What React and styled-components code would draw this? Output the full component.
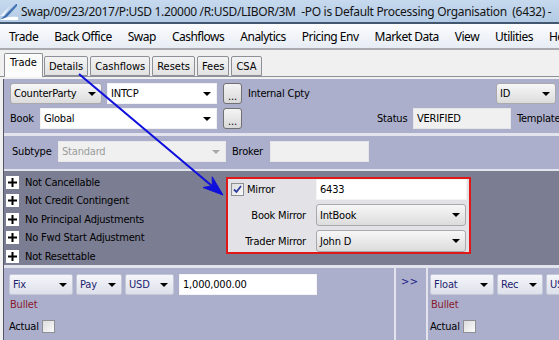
import React from 'react';
import styled, { createGlobalStyle, css } from 'styled-components';

const UI = '"Noto Sans", "Open Sans", sans-serif';
const FORM = '"DejaVu Sans Condensed", "Liberation Sans", sans-serif';

const LAV = '#abafcc';
const DARK = '#7b7d92';
const SEP = '#e2e3ec';

const GlobalStyle = createGlobalStyle`
  html, body { margin: 0; padding: 0; overflow: hidden; background: #f0f0f0; }
  #root { width: 559px; height: 340px; overflow: hidden; }
`;

const Window = styled.div`
  position: relative;
  width: 640px;
  height: 340px;
  overflow: hidden;
  background: #f0f0f0;
  font-family: ${FORM};
  font-size: 11px;
  letter-spacing: -0.2px;
  color: #000;
`;

const TitleBar = styled.div`
  height: 22px;
  display: flex;
  align-items: center;
  background: linear-gradient(#c6d9ee, #b3cbe5);
  border-bottom: 2px solid #42566f;
  font-family: ${UI};
  font-size: 12px;
  letter-spacing: -0.32px;
  color: #141414;
  white-space: pre;
`;

const TitleText = styled.span`
  margin-left: 3px;
`;

const MenuBar = styled.div`
  height: 24px;
  display: flex;
  align-items: center;
  padding-left: 1px;
  background: linear-gradient(#fbfcfe, #e7ecf4);
  border-bottom: 2px solid #a9abb0;
  font-family: ${UI};
  font-size: 12px;
  letter-spacing: -0.5px;
  white-space: nowrap;
`;

const MenuItem = styled.span`
  padding: 0 8px;
`;

const TabStrip = styled.div`
  height: 26px;
  display: flex;
  align-items: flex-end;
  padding-left: 4px;
  background: #f0f0f0;
  position: relative;
  z-index: 1;
`;

const Tab = styled.div`
  box-sizing: border-box;
  height: ${(p) => (p.$active ? 24 : 20)}px;
  margin-right: ${(p) => (p.$active ? 1 : 2)}px;
  margin-bottom: ${(p) => (p.$active ? -1 : 0)}px;
  padding: ${(p) => (p.$active ? '2px 5px 0' : '3px 4px 0')};
  border: 1px solid #8d9096;
  border-bottom: ${(p) => (p.$active ? 'none' : '1px solid #8d9096')};
  border-radius: 2px 2px 0 0;
  background: ${(p) => (p.$active ? '#fcfcfc' : 'linear-gradient(#f3f3f3, #e2e2e2)')};
  font-size: 11px;
  letter-spacing: 0;
  line-height: 14px;
`;

const TabBody = styled.div`
  border-top: 1px solid #8d9096;
  padding-top: 2px;
  background: #f0f0f0;
`;

const Frame = styled.div`
  margin-left: 3px;
  border-left: 1px solid #54566a;
  background: ${LAV};
`;

const HeaderPanel = styled.div`
  height: 57px;
  box-sizing: border-box;
  padding: 4px 0 0 6px;
  display: flex;
  flex-direction: column;
  gap: 4px;
  border-bottom: 3px solid ${SEP};
`;

const Row = styled.div`
  display: flex;
  align-items: center;
  height: 21px;
  gap: ${(p) => p.$gap ?? 5}px;
  white-space: nowrap;
`;

const Label = styled.span`
  display: inline-block;
  width: ${(p) => (p.$w ? `${p.$w}px` : 'auto')};
  margin-left: ${(p) => p.$ml || 0}px;
  padding-right: ${(p) => p.$pr || 0}px;
  text-align: ${(p) => (p.$right ? 'right' : 'left')};
  flex-shrink: 0;
  color: ${(p) => p.$color || '#000'};
`;

const variants = {
  button: css`
    background: linear-gradient(#f7f7f7, #dcdcdc);
    border-color: #a9a9ad;
    border-radius: 3px;
  `,
  field: css`
    background: #fff;
    border-color: #f2f2f2;
  `,
  disabled: css`
    background: #f0f0f0;
    border-color: #e8e8e8;
    color: #9b9b9b;
  `,
  leg: css`
    background: linear-gradient(#f5f6fb, #dde0ea);
    border-color: #c4c7d6;
    border-radius: 2px;
    color: #1d1d6e;
  `,
};

const Combo = styled.div`
  box-sizing: border-box;
  flex-shrink: 0;
  width: ${(p) => p.$w}px;
  height: ${(p) => p.$h || 21}px;
  display: flex;
  align-items: center;
  justify-content: space-between;
  padding: 0 5px 0 3px;
  border: 1px solid;
  ${(p) => variants[p.$variant || 'field']}
`;

const Arrow = styled.span`
  width: 0;
  height: 0;
  border-left: 4px solid transparent;
  border-right: 4px solid transparent;
  border-top: 4px solid ${(p) => (p.$dim ? '#a8a8a8' : '#000')};
`;

const Field = styled.div`
  box-sizing: border-box;
  flex-shrink: 0;
  width: ${(p) => p.$w}px;
  height: ${(p) => p.$h || 21}px;
  margin-left: ${(p) => p.$ml || 0}px;
  display: flex;
  align-items: center;
  padding: 0 3px;
  background: ${(p) => (p.$readonly ? '#f0f0f0' : '#fff')};
  border: 1px solid ${(p) => (p.$readonly ? '#e6e6e6' : '#f4f4f4')};
`;

const DotsButton = styled.div`
  box-sizing: border-box;
  flex-shrink: 0;
  width: 19px;
  height: 21px;
  margin-left: 1px;
  border: 1px solid #707070;
  border-radius: 3px;
  background: linear-gradient(#f4f4f4, #d9d9d9);
  display: flex;
  align-items: flex-end;
  justify-content: center;
  line-height: 13px;
  font-size: 11px;
`;

const SubtypePanel = styled.div`
  height: 35px;
  box-sizing: border-box;
  padding: 5px 0 0 8px;
  border-bottom: 2px solid ${SEP};
`;

const OptionsPanel = styled.div`
  height: 97px;
  box-sizing: border-box;
  background: ${DARK};
  border-bottom: 3px solid ${SEP};
  display: flex;
  align-items: flex-start;
  padding: 2px 0 0 2px;
`;

const OptionList = styled.div`
  width: 220px;
  display: flex;
  flex-direction: column;
`;

const OptionItem = styled.div`
  height: 18.5px;
  display: flex;
  align-items: center;
  gap: 6px;
  white-space: nowrap;
`;

const PlusBox = styled.span`
  width: 13px;
  height: 13px;
  background: #fff;
  display: flex;
  align-items: center;
  justify-content: center;
  flex-shrink: 0;
`;

const MirrorBox = styled.div`
  margin-top: 4px;
  width: 245px;
  height: 77px;
  box-sizing: border-box;
  border: 2px solid #e01818;
  background: #e3e3e7;
  display: grid;
  grid-template-columns: 88px 151px;
  grid-template-rows: 21px 22px 22px;
  row-gap: 4px;
  align-items: center;
`;

const CheckWrap = styled.label`
  display: flex;
  align-items: center;
  gap: 3px;
  padding-left: 3px;
`;

const Box = styled.span`
  box-sizing: border-box;
  width: 13px;
  height: 13px;
  border: 1px solid #8e8f94;
  background: linear-gradient(135deg, #dcdcdc, #fbfbfb);
  display: flex;
  align-items: center;
  justify-content: center;
  flex-shrink: 0;
`;

const LegsPanel = styled.div`
  height: 80px;
  display: flex;
`;

const Leg = styled.div`
  width: ${(p) => p.$w}px;
  box-sizing: border-box;
  padding: ${(p) => p.$pad};
  display: flex;
  flex-direction: column;
  flex-shrink: 0;
`;

const LegLine = styled.div`
  display: flex;
  align-items: center;
  height: ${(p) => p.$h}px;
  gap: ${(p) => p.$gap || 0}px;
  padding-left: ${(p) => p.$pl || 0}px;
  white-space: nowrap;
`;

const LegDivider = styled.div`
  width: 25px;
  flex-shrink: 0;
  border-left: 2px solid ${SEP};
  border-right: 2px solid ${SEP};
  color: #1c1c86;
  padding: 7px 0 0 5px;
  box-sizing: content-box;
  letter-spacing: 0.5px;
`;

const Overlay = styled.svg`
  position: absolute;
  left: 0;
  top: 0;
  pointer-events: none;
  z-index: 5;
`;

const Logo = () => (
  <svg width="18" height="22" viewBox="0 0 18 22" style={{ flexShrink: 0 }}>
    <defs>
      <linearGradient id="lg" x1="0" y1="0" x2="1" y2="1">
        <stop offset="0" stopColor="#6d9bd1" />
        <stop offset="1" stopColor="#1f4f98" />
      </linearGradient>
    </defs>
    <path d="M1 19 L16 4 L17 4 L17 6 L5 19 Z" fill="url(#lg)" />
    <path d="M0 20 C5 17 11 16 18 17 L18 20 Z" fill="#fff" />
    <path d="M0 16 L10 6 L4 16 Z" fill="#e9f1fb" />
  </svg>
);

const ComboBox = ({ w, h, variant, children, dim }) => (
  <Combo $w={w} $h={h} $variant={variant}>
    <span>{children}</span>
    <Arrow $dim={dim} />
  </Combo>
);

const Check = ({ checked }) => (
  <Box>
    {checked && (
      <svg width="9" height="9" viewBox="0 0 9 9">
        <path d="M1 4.5 L3.5 7 L8 1" fill="none" stroke="#2a3c9e" strokeWidth="1.8" />
      </svg>
    )}
  </Box>
);

const Plus = () => (
  <PlusBox>
    <svg width="11" height="11" viewBox="0 0 11 11">
      <rect x="1" y="4.5" width="9" height="2" fill="#000" />
      <rect x="4.5" y="1" width="2" height="9" fill="#000" />
    </svg>
  </PlusBox>
);

const menu = ['Trade', 'Back Office', 'Swap', 'Cashflows', 'Analytics', 'Pricing Env', 'Market Data', 'View', 'Utilities', 'Help'];
const tabs = ['Trade', 'Details', 'Cashflows', 'Resets', 'Fees', 'CSA'];
const options = ['Not Cancellable', 'Not Credit Contingent', 'No Principal Adjustments', 'No Fwd Start Adjustment', 'Not Resettable'];

const LegBlock = ({ w, pad, type, dir, amount }) => (
  <Leg $w={w} $pad={pad}>
    <LegLine $h={23} $gap={3}>
      <ComboBox w={64} variant="leg">{type}</ComboBox>
      <ComboBox w={46} variant="leg">{dir}</ComboBox>
      <ComboBox w={49} variant="leg">USD</ComboBox>
      {amount && <Field $w={138} $ml={2}>{amount}</Field>}
    </LegLine>
    <LegLine $h={17} $pl={1}>
      <Label $color="#8a1a2c">Bullet</Label>
    </LegLine>
    <LegLine $h={26} $gap={3}>
      <span>Actual</span>
      <Check />
    </LegLine>
  </Leg>
);

export default function App() {
  return (
    <>
      <GlobalStyle />
      <Window>
        <TitleBar>
          <Logo />
          <TitleText>Swap/09/23/2017/P:USD 1.20000 /R:USD/LIBOR/3M  -PO is Default Processing Organisation  (6432) -</TitleText>
        </TitleBar>
        <MenuBar>
          {menu.map((m) => (
            <MenuItem key={m}>{m}</MenuItem>
          ))}
        </MenuBar>
        <TabStrip>
          {tabs.map((t, i) => (
            <Tab key={t} $active={i === 0}>{t}</Tab>
          ))}
        </TabStrip>
        <TabBody>
          <Frame>
            <HeaderPanel>
              <Row>
                <ComboBox w={92} variant="button">CounterParty</ComboBox>
                <ComboBox w={110}>INTCP</ComboBox>
                <DotsButton>...</DotsButton>
                <Label $w={243} $ml={1}>Internal Cpty</Label>
                <ComboBox w={60} variant="button">ID</ComboBox>
              </Row>
              <Row>
                <Label $w={25}>Book</Label>
                <ComboBox w={177}>Global</ComboBox>
                <DotsButton>...</DotsButton>
                <Label $w={31} $ml={130}>Status</Label>
                <Field $w={98} $readonly>VERIFIED</Field>
                <Label $ml={1}>Template</Label>
              </Row>
            </HeaderPanel>
            <SubtypePanel>
              <Row $gap={6}>
                <Label $w={40}>Subtype</Label>
                <ComboBox w={168} variant="disabled" dim>Standard</ComboBox>
                <Label $w={32}>Broker</Label>
                <Field $w={99} $readonly />
              </Row>
            </SubtypePanel>
            <OptionsPanel>
              <OptionList>
                {options.map((o) => (
                  <OptionItem key={o}>
                    <Plus />
                    <span>{o}</span>
                  </OptionItem>
                ))}
              </OptionList>
              <MirrorBox>
                <CheckWrap>
                  <Check checked />
                  <span>Mirror</span>
                </CheckWrap>
                <Field $w={151} $h={21}>6433</Field>
                <Label $right $pr={10}>Book Mirror</Label>
                <ComboBox w={150} h={22} variant="button">IntBook</ComboBox>
                <Label $right $pr={10}>Trader Mirror</Label>
                <ComboBox w={150} h={22} variant="button">John D</ComboBox>
              </MirrorBox>
            </OptionsPanel>
            <LegsPanel>
              <LegBlock w={390} pad="5px 0 0 5px" type="Fix" dir="Pay" amount="1,000,000.00" />
              <LegDivider>&gt;&gt;</LegDivider>
              <LegBlock w={200} pad="5px 0 0 2px" type="Float" dir="Rec" />
            </LegsPanel>
          </Frame>
        </TabBody>
        <Overlay width="559" height="340" viewBox="0 0 559 340">
          <line x1="79" y1="74" x2="212" y2="186" stroke="#1010dc" strokeWidth="2" />
          <path d="M223 195 L203 187.5 L212.3 185.9 L212.2 176.8 Z" fill="#1010dc" stroke="#1010dc" strokeWidth="1" strokeLinejoin="round" />
        </Overlay>
      </Window>
    </>
  );
}
